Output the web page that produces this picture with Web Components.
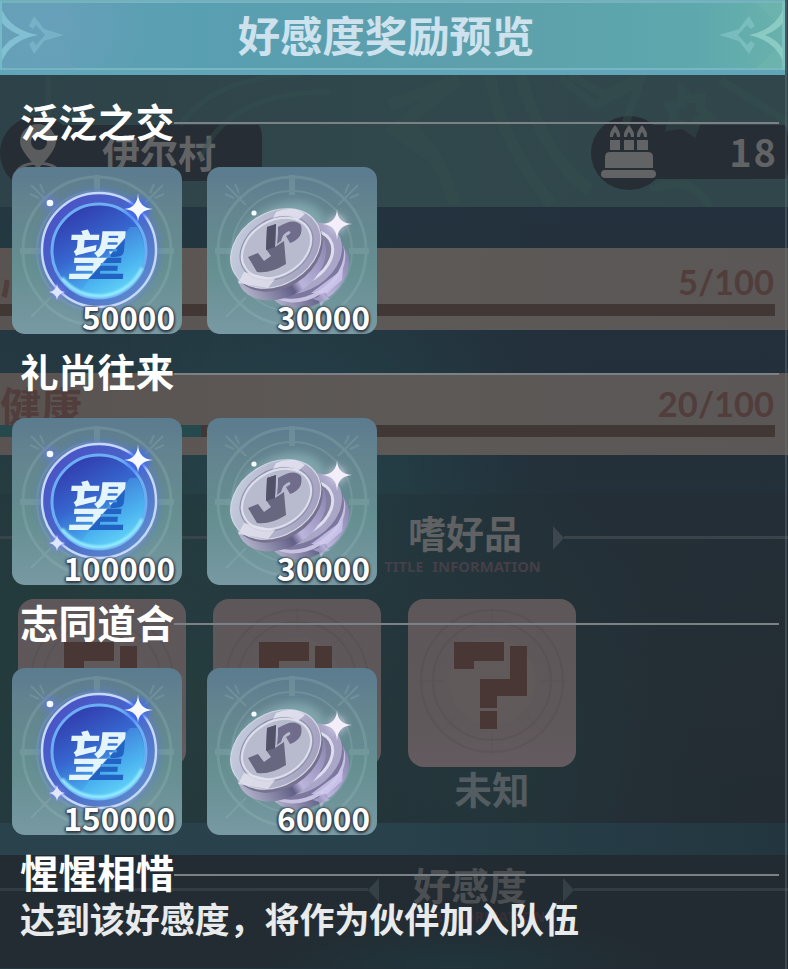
<!DOCTYPE html>
<html lang="zh-CN">
<head>
<meta charset="UTF-8">
<title>好感度奖励预览</title>
<style>
    body {
        margin: 0;
        background: #232c33;
        font-family: "Liberation Sans", "Noto Sans CJK SC", sans-serif;
    }
</style>
</head>
<body>
<reward-screen>
    <profile-backdrop slot="backdrop"></profile-backdrop>
    <title-banner>好感度奖励预览</title-banner>
    <reward-tier name="泛泛之交">
        <reward-card kind="hope">50000</reward-card>
        <reward-card kind="coin">30000</reward-card>
    </reward-tier>
    <reward-tier name="礼尚往来">
        <reward-card kind="hope">100000</reward-card>
        <reward-card kind="coin">30000</reward-card>
    </reward-tier>
    <reward-tier name="志同道合">
        <reward-card kind="hope">150000</reward-card>
        <reward-card kind="coin">60000</reward-card>
    </reward-tier>
    <reward-tier name="惺惺相惜">
        <reward-note>达到该好感度，将作为伙伴加入队伍</reward-note>
    </reward-tier>
</reward-screen>

<script>
    function define(name, render) {
        customElements.define(name, class extends HTMLElement {
            constructor() {
                super();
                this.attachShadow({ mode: 'open' });
            }

            connectedCallback() {
                const template = document.createElement('template');
                template.innerHTML = render(this);
                this.shadowRoot.replaceChildren(template.content.cloneNode(true));
            }
        });
    }

    // ---------- screen ----------

    define('reward-screen', () => `
        <style>
            :host {
                display: grid;
                width: 788px;
                height: 969px;
                overflow: hidden;
                font-family: "Noto Sans CJK SC", sans-serif;
                font-weight: 700;
            }
            .backdrop, .front {
                grid-area: 1 / 1;
                min-width: 0;
                min-height: 0;
            }
            .front {
                z-index: 1;
            }
        </style>
        <div class="backdrop"><slot name="backdrop"></slot></div>
        <div class="front"><slot></slot></div>
    `);

    define('title-banner', () => `
        <style>
            :host {
                display: grid;
                grid-template-columns: 74px 1fr 74px;
                align-items: center;
                box-sizing: border-box;
                width: 785px;
                height: 75px;
                margin-bottom: 26px;
                padding: 0 1px;
                border-top: 1px solid #6eb0bc;
                border-bottom: 5px solid #60a5b8;
                background:
                    radial-gradient(circle at 8% 30%, #6d9fbd80, transparent 12%),
                    linear-gradient(90deg, #62a0b6 0, #599fb2 25%, #5d9fab 60%, #5da8ad 88%, #69b1ac 100%);
                box-shadow: inset 2px 0 #76bac9, inset -3px 0 #7dbfc0, inset 0 -2px #78b6c4, inset 0 2px #76b3bf;
            }
            .title {
                padding: 0 13px 4px 0;
                color: #cee2ee;
                font-size: 42.4px;
                line-height: 65px;
                text-align: center;
                white-space: nowrap;
            }
            svg {
                display: block;
            }
            .right {
                transform: scaleX(-1);
            }
        </style>
        <svg width="74" height="69" viewBox="0 0 74 69">
            <path d="M0 0H74L58 34 74 69H0z" fill="#7aa6c7" opacity=".12"/>
            <path d="M1 9Q10 29 37 34Q10 39 1 60V48Q8 38 19 34Q8 30 1 22z" fill="#82bfd2"/>
            <path d="M33 15L43 28L63 34L43 40L33 53L28 43L32 40L35 44L44 34L35 24L32 28L28 25z" fill="#7bb5ca" opacity=".8"/>
        </svg>
        <div class="title"><slot></slot></div>
        <svg class="right" width="74" height="69" viewBox="0 0 74 69">
            <path d="M0 0H30L0 28zM0 69V41L30 69z" fill="#80c2b5" opacity=".2"/>
            <path d="M1 9Q10 29 35 34Q10 39 1 60V48Q8 38 19 34Q8 30 1 22z" fill="#8acbc4"/>
            <path d="M35 15L45 28L65 34L45 40L35 53L29 43L33 40L37 44L46 34L37 24L33 28L29 25z" fill="#7fc0c2" opacity=".8"/>
        </svg>
    `);

    define('reward-tier', el => `
        <style>
            :host {
                display: block;
                margin-bottom: 17.5px;
            }
            .head {
                display: flex;
                align-items: center;
                height: 44px;
                padding: 0 9px 0 20px;
            }
            .name {
                padding-bottom: 7px;
                color: #fff;
                font-size: 38.6px;
                line-height: 44px;
                white-space: nowrap;
            }
            .rule {
                flex: 1;
                height: 2px;
                background: #7b8185;
            }
            .items {
                display: flex;
                gap: 25px;
                padding: 22px 0 0 12px;
            }
            :host(:last-of-type) .items {
                padding: 0 0 0 20px;
            }
        </style>
        <div class="head">
            <span class="name">${el.getAttribute('name')}</span>
            <span class="rule"></span>
        </div>
        <div class="items"><slot></slot></div>
    `);

    define('reward-note', () => `
        <style>
            :host {
                display: block;
                color: #e8eaeb;
                font-size: 34.95px;
                line-height: 42px;
                white-space: nowrap;
            }
        </style>
        <slot></slot>
    `);

    // ---------- reward icons, drawn on a 170x167 card ----------

    const dial = `
        <g fill="none" stroke="#a8c5c8" opacity=".2">
            <circle cx="85" cy="84" r="74" stroke-width="3"/>
            <circle cx="85" cy="84" r="60" stroke-width="2"/>
            <path d="M85 8v20M85 140v20M8 84h20M142 84h20" stroke-width="6"/>
            <path d="M19 18l20 20M151 18l-20 20M19 150l20-20M28 17l4 9M18 27l9 4M142 17l-4 9M152 27l-9 4" stroke-width="2"/>
        </g>`;

    const icons = {
        hope: `
            <defs>
                <linearGradient id="disc" x1=".2" y1="0" x2=".75" y2="1">
                    <stop offset="0" stop-color="#3036a8"/>
                    <stop offset=".45" stop-color="#3767cf"/>
                    <stop offset=".75" stop-color="#47abed"/>
                    <stop offset="1" stop-color="#6fe4fa"/>
                </linearGradient>
                <linearGradient id="ring" x1="0" y1="0" x2="1" y2="1">
                    <stop offset="0" stop-color="#4b4dc4"/>
                    <stop offset=".5" stop-color="#4867c8"/>
                    <stop offset="1" stop-color="#6496cf"/>
                </linearGradient>
                <linearGradient id="split" gradientUnits="userSpaceOnUse" x1="13" y1="-38" x2="63" y2="-2">
                    <stop offset=".5" stop-color="#e4f6fc"/>
                    <stop offset=".52" stop-color="#2262c3"/>
                </linearGradient>
                <clipPath id="lower"><path d="M64 130L118 60H150V140H60z"/></clipPath>
                <filter id="glow" x="-50%" y="-50%" width="200%" height="200%"><feGaussianBlur stdDeviation="3"/></filter>
                <filter id="soft"><feGaussianBlur stdDeviation=".8"/></filter>
            </defs>
            <circle cx="87" cy="83" r="58" fill="none" stroke="#5879e8" stroke-width="6" opacity=".5" filter="url(#glow)"/>
            <circle cx="87" cy="83" r="57" fill="url(#ring)" stroke="#c6d8fb" stroke-width="2.4"/>
            <circle cx="87" cy="84" r="47" fill="url(#disc)" stroke="#6caef3" stroke-width="3"/>
            <g clip-path="url(#lower)"><circle cx="87" cy="84" r="45" fill="#5bcbf8" opacity=".3"/></g>
            <path d="M50 111A47 47 0 0 0 130 101" fill="none" stroke="#9af2ff" stroke-width="3" filter="url(#soft)"/>
            <text transform="translate(54 108) skewX(-5) scale(1.06 .94)" font-size="57" font-weight="700" fill="url(#split)"
                style="font-family: 'Noto Sans CJK SC', sans-serif">望</text>
            <circle cx="38" cy="36" r="7" fill="#6579ef" opacity=".6" filter="url(#glow)"/>
            <circle cx="38" cy="36" r="3.3" fill="#f5f8ff"/>
            <circle cx="126" cy="42" r="11" fill="#416bf4" opacity=".9" filter="url(#glow)"/>
            <circle cx="126" cy="42" r="4" fill="#f6faff" filter="url(#soft)"/>
            <path d="M126 26Q126.500 41 141 42Q126.500 43 126 55Q125.500 43 112 42Q125.500 41 126 26z" fill="#f6faff"/>
            <circle cx="45" cy="125" r="6" fill="#7a80ff" opacity=".8" filter="url(#glow)"/>
            <circle cx="45" cy="125" r="3" fill="#eaf0ff" filter="url(#soft)"/>
            <path d="M45 117Q46 124 53 125Q46 126 45 133Q44 126 37 125Q44 124 45 117z" fill="#dfe7ff"/>`,
        coin: `
            <defs>
                <linearGradient id="face" x1="0" y1="0" x2="1" y2=".8">
                    <stop offset="0" stop-color="#c8d3e2"/>
                    <stop offset=".5" stop-color="#b5b7ce"/>
                    <stop offset="1" stop-color="#a29fbe"/>
                </linearGradient>
                <linearGradient id="edge" x1="0" y1="0" x2="1" y2="0">
                    <stop offset="0" stop-color="#b1b2ca"/>
                    <stop offset=".45" stop-color="#625f87"/>
                    <stop offset=".55" stop-color="#bbb5dc"/>
                    <stop offset="1" stop-color="#8b86b2"/>
                </linearGradient>
                <filter id="glow" x="-50%" y="-50%" width="200%" height="200%"><feGaussianBlur stdDeviation="4"/></filter>
                <filter id="soft" x="-50%" y="-50%" width="200%" height="200%"><feGaussianBlur stdDeviation=".8"/></filter>
            </defs>
            <ellipse cx="73" cy="76" rx="51" ry="36" fill="#c1edf2" opacity=".3" transform="rotate(-35 73 76)" filter="url(#glow)"/>
            <g transform="rotate(-33 100 98)">
                <ellipse cx="97" cy="105" rx="44" ry="32" fill="url(#edge)"/>
                <ellipse cx="97" cy="98" rx="44" ry="32" fill="#c8c2e2"/>
                <ellipse cx="98" cy="94" rx="44" ry="32" fill="#7b779f"/>
                <ellipse cx="99" cy="89" rx="44" ry="32" fill="#aaa6c7"/>
                <ellipse cx="99" cy="89" rx="34" ry="24" fill="#827f9f" stroke="#ddddf0" stroke-width="3"/>
            </g>
            <path d="M104 126L136 102L135 113L120 126z" fill="#d0c8ef" opacity=".8"/>
            <g transform="rotate(-32 72 83)">
                <ellipse cx="68" cy="94" rx="48" ry="35" fill="url(#edge)"/>
                <ellipse cx="70" cy="84" rx="48" ry="36" fill="#75718f"/>
                <ellipse cx="70" cy="80" rx="48" ry="36" fill="url(#face)" stroke="#d2d7e4" stroke-width="1.2"/>
                <ellipse cx="71" cy="80" rx="37" ry="27" fill="#b8bace" stroke="#dcdfeb" stroke-width="2"/>
                <ellipse cx="71" cy="80" rx="39" ry="29" fill="none" stroke="#908faa"/>
            </g>
            <path d="M37 105L68 112L61 121L31 116z" fill="#e4e2ef" opacity=".8"/>
            <path d="M69 45Q85 38 98 47L91 53Q80 46 66 51z" fill="#e8e7f5" opacity=".8"/>
            <!-- mint mark -->
            <path d="M60 60L69 57L68 80L77 74L79 97Q63 107 50 105L41 90L51 86L57 94L64 89L59 82z" fill="#67677f"/>
            <path d="M60 60L69 57L68 80L59 83z" fill="#515269"/>
            <path d="M71 67V60Q87 50 94 58Q97 71 83 76L79 69Q86 66 82 64Q76 66 74 74L70 77z" fill="#6f6d8b"/>
            <circle cx="47" cy="46" r="2.6" fill="#f6fcff"/>
            <circle cx="130" cy="57" r="8" fill="#ece5fc" opacity=".7" filter="url(#glow)"/>
            <circle cx="130" cy="57" r="3" fill="#f9f4ff" filter="url(#soft)"/>
            <path d="M130 42Q130.500 56 145 57Q130.500 58 130 73Q129.500 58 115 57Q129.500 56 130 42z" fill="#f4eefb"/>
            <path d="M116 122l2 7 5 3-6 2-3 6-2-6-6-2 6-3z" fill="#d9d0fa" opacity=".5"/>`
    };

    define('reward-card', el => `
        <style>
            :host {
                display: grid;
                width: 170px;
                height: 167px;
            }
            svg, .amount {
                grid-area: 1 / 1;
            }
            svg {
                display: block;
                border-radius: 13px;
                background: linear-gradient(180deg, #5b7b8f 0, #64858f 25%, #658f91 60%, #7899a3 100%);
            }
            .amount {
                z-index: 1;
                align-self: end;
                justify-self: end;
                padding-right: 7px;
                color: #fff;
                font-size: 31.5px;
                line-height: 36px;
                text-shadow: 0 0 3px #333c49, 1px 1px 2px #333c49, -1px 0 2px #333c49, 0 2px 3px #333c49;
            }
        </style>
        <svg width="170" height="167" viewBox="0 0 170 167">${dial}${icons[el.getAttribute('kind')]}</svg>
        <span class="amount"><slot></slot></span>
    `);

    // ---------- dimmed character profile behind the list ----------

    define('profile-backdrop', () => `
        <style>
            :host {
                display: block;
                position: relative;
                box-sizing: border-box;
                width: 788px;
                height: 969px;
                overflow: hidden;
                background:
                    radial-gradient(ellipse at 38% 48%, #24424a 0, transparent 34%),
                    radial-gradient(ellipse at 18% 70%, #294442 0, transparent 38%),
                    radial-gradient(ellipse at 62% 78%, #253c40 0, transparent 28%),
                    linear-gradient(90deg, #243c44aa, transparent 75%),
                    linear-gradient(180deg, #243140 0, #23303a 45%, #242f36 70%, #222b33 100%);
            }
            /* thin edge of the panel on the right */
            :host::after {
                content: "";
                position: absolute;
                inset: 0 1px 0 auto;
                width: 2px;
                background: #6a767a66;
            }
            .top {
                display: grid;
                box-sizing: border-box;
                height: 207px;
                background: linear-gradient(90deg, #2e4349, #30474b 50%, #30464a);
            }
            .pattern, .facts {
                grid-area: 1 / 1;
            }
            .facts {
                display: flex;
                justify-content: space-between;
                align-items: flex-start;
                padding-top: 116px;
            }
            .stats {
                display: flex;
                flex-direction: column;
                gap: 43px;
                padding: 41px 0 39px;
            }
            .likes {
                box-sizing: border-box;
                height: 329px;
                padding-top: 17px;
                background: linear-gradient(90deg, #20353a66, #242b3166);
            }
            .cards {
                display: flex;
                gap: 27px;
                padding: 20px 0 0 18px;
            }
            .band {
                height: 32px;
                background: linear-gradient(90deg, #29424b, #28414a 50%, #233640);
            }
            .bond {
                height: 113px;
                box-sizing: border-box;
                padding-top: 8px;
                background: radial-gradient(ellipse at 58% 100%, #20363d, transparent 32%), linear-gradient(90deg, #232c32, #222b31);
            }
        </style>
        <div class="top">
            <svg class="pattern" width="788" height="207" viewBox="0 0 788 207" fill="none" stroke="#35504f" opacity=".4">
                <path d="M180 125Q215 76 300 75M200 160Q225 92 330 92M48 76V126" stroke-width="5"/>
                <path d="M390 105L458 80L394 130L430 155M490 75Q500 140 552 205M520 75Q545 160 590 190M400 118Q440 150 455 205" stroke-width="12"/>
                <path d="M560 78L595 105L640 82L625 125M570 75L605 95L650 70" stroke-width="8"/>
                <path d="M682 91l8 8 11-2-1 12 9 8-12 4-4 10-10-7-12 2 3-11-5-9 12-2z" stroke-width="9"/>
                <path d="M650 190Q690 172 710 207M720 80L788 122" stroke-width="8"/>
            </svg>
            <div class="facts">
                <fact-pill kind="place">伊尔村</fact-pill>
                <fact-pill kind="birthday">18</fact-pill>
            </div>
        </div>
        <div class="stats">
            <stat-row value="5/100" fill="0">心</stat-row>
            <stat-row class="tall" value="20/100" fill="26">健康</stat-row>
        </div>
        <div class="likes">
            <section-title sub="TITLE INFORMATION">嗜好品</section-title>
            <div class="cards">
                <unknown-card></unknown-card>
                <unknown-card></unknown-card>
                <unknown-card>未知</unknown-card>
            </div>
        </div>
        <div class="band"></div>
        <div class="bond">
            <section-title class="low" sub="INFORMATION">好感度</section-title>
        </div>
    `);

    const factIcons = {
        place: `
            <path d="M38 8A18 18 0 0 0 20 26Q20 34 38 53Q56 34 56 26A18 18 0 0 0 38 8z" fill="#5b5c5e"/>
            <circle cx="39" cy="26" r="8" fill="#272d34"/>
            <path d="M17 56Q20 48 38 47Q56 48 59 56" fill="none" stroke="#5b5c5e" stroke-width="3"/>`,
        birthday: `
            <g fill="#616365">
                <path d="M24 9Q18 16 19 21H22Q22 18 24 16Q26 18 26 21H29Q30 16 24 9zM38 9Q32 16 33 21H36Q36 18 38 16Q40 18 40 21H43Q44 16 38 9zM51 9Q45 16 46 21H49Q49 18 51 16Q53 18 53 21H56Q57 16 51 9z"/>
                <path d="M19 24h10v10H19zM33 24h10v10H33zM46 24h11v10H46z"/>
                <path d="M19 36h38q5 0 5 5v11H14V41q0-5 5-5z"/>
                <rect x="10" y="54" width="55" height="8" rx="4"/>
            </g>`
    };

    define('fact-pill', el => `
        <style>
            :host {
                display: grid;
                grid-template-columns: 76px 1fr;
                align-items: center;
                height: 74px;
                width: 262px;
                color: #626365;
            }
            :host {
                background: linear-gradient(#272d34, #272d34) 36px 9px / 226px 56px no-repeat;
                border-radius: 0 20px 20px 0;
            }
            :host([kind="birthday"]) {
                width: 197px;
                background-size: 170px 54px;
            }
            .disc {
                width: 76px;
                height: 74px;
                border-radius: 50%;
                background: #272d34;
            }
            .text {
                padding: 0 0 3px 26px;
                font-size: 38px;
                line-height: 54px;
            }
            :host([kind="birthday"]) .text {
                padding: 0 10px 5px 0;
                font-size: 38px;
                letter-spacing: 2px;
                text-align: right;
            }
            svg {
                display: block;
            }
        </style>
        <div class="disc"><svg width="76" height="74" viewBox="0 0 76 74">${factIcons[el.getAttribute('kind')]}</svg></div>
        <span class="text"><slot></slot></span>
    `);

    define('stat-row', el => `
        <style>
            :host {
                display: grid;
                grid-template-rows: 1fr 12px;
                box-sizing: border-box;
                height: 82px;
                padding-bottom: 14px;
                padding-right: 13px;
                background: linear-gradient(90deg, #595451, #5d5957 50%, #5b5756);
                color: #513d3c;
            }
            :host(.tall) {
                padding-bottom: 18px;
            }
            .line {
                display: flex;
                justify-content: space-between;
                align-items: center;
                padding-top: 11px;
                font-size: 40px;
                line-height: 40px;
            }
            :host(.tall) .line {
                padding-top: 10px;
            }
            .label {
                font-size: 41px;
            }
            .value {
                padding-right: 1px;
                font-size: 34.5px;
                font-family: Lato, "Noto Sans", sans-serif;
            }
            .bar {
                background: linear-gradient(90deg, #26494e ${el.getAttribute('fill')}%, #413735 0);
            }
        </style>
        <div class="line"><span class="label"><slot></slot></span><span class="value">${el.getAttribute('value')}</span></div>
        <div class="bar"></div>
    `);

    define('section-title', el => `
        <style>
            :host {
                display: grid;
                grid-template-columns: 368px 196px 1fr;
                height: 68px;
                color: #5f6163;
            }
            .words {
                display: flex;
                flex-direction: column;
                align-items: center;
                padding-right: 2px;
            }
            .name {
                margin-top: -2px;
                font-size: 38px;
                line-height: 46px;
            }
            .sub {
                padding-top: 2px;
                margin-left: -5px;
                color: #453f48;
                font: 700 14.8px/18px "Noto Sans", sans-serif;
                white-space: nowrap;
                word-spacing: 5px;
            }
            .rule {
                display: flex;
                align-items: center;
                height: 53px;
            }
            .rule::before {
                content: "";
                border: solid transparent;
                border-width: 12px 0 12px 11px;
                border-left-color: #3b474d;
            }
            .rule::after {
                content: "";
                flex: 1;
                height: 3px;
                background: #38434a;
            }
            .left {
                transform: scaleX(-1);
            }
            .right {
                margin-left: -11px;
            }
            :host(.low) {
                grid-template-columns: 379px 184px 1fr;
                color: #4b4f52;
            }
            :host(.low) .sub {
                margin-left: 42px;
                padding: 0;
                color: #352f38;
            }
            :host(.low) .rule {
                height: 53px;
                opacity: .75;
            }
            :host(.low) .right {
                margin-left: 0;
            }
        </style>
        <span class="rule left"></span>
        <span class="words"><span class="name"><slot></slot></span><span class="sub">${el.getAttribute('sub')}</span></span>
        <span class="rule right"></span>
    `);

    define('unknown-card', () => `
        <style>
            :host {
                display: flex;
                flex-direction: column;
                align-items: center;
                width: 168px;
                color: #535d61;
                font-size: 37.5px;
                line-height: 44px;
            }
            svg {
                display: block;
                border-radius: 16px;
                background: linear-gradient(#5e5759, #5f585a 70%, #635b5f);
                margin-bottom: -1px;
            }
        </style>
        <svg width="168" height="168" viewBox="0 0 168 168">
            <g fill="none" stroke="#514a4e" opacity=".3">
                <circle cx="84" cy="82" r="71" stroke-width="2"/>
                <circle cx="84" cy="82" r="59" stroke-width="2"/>
                <path d="M84 8v20M84 134v22M12 82h24M134 82h24M32 30l16 16M136 30l-16 16M32 134l16-16M136 134l-16-16"/>
            </g>
            <circle cx="84" cy="82" r="44" fill="#666061" opacity=".25"/>
            <g fill="#493736">
                <rect x="46" y="43" width="50" height="19"/>
                <rect x="46" y="43" width="20" height="27"/>
                <rect x="102" y="47" width="17" height="50"/>
                <rect x="72" y="80" width="47" height="17"/>
                <rect x="72" y="80" width="17" height="29"/>
                <rect x="72" y="112" width="17" height="18"/>
            </g>
        </svg>
        <slot></slot>
    `);
</script>
</body>
</html>
